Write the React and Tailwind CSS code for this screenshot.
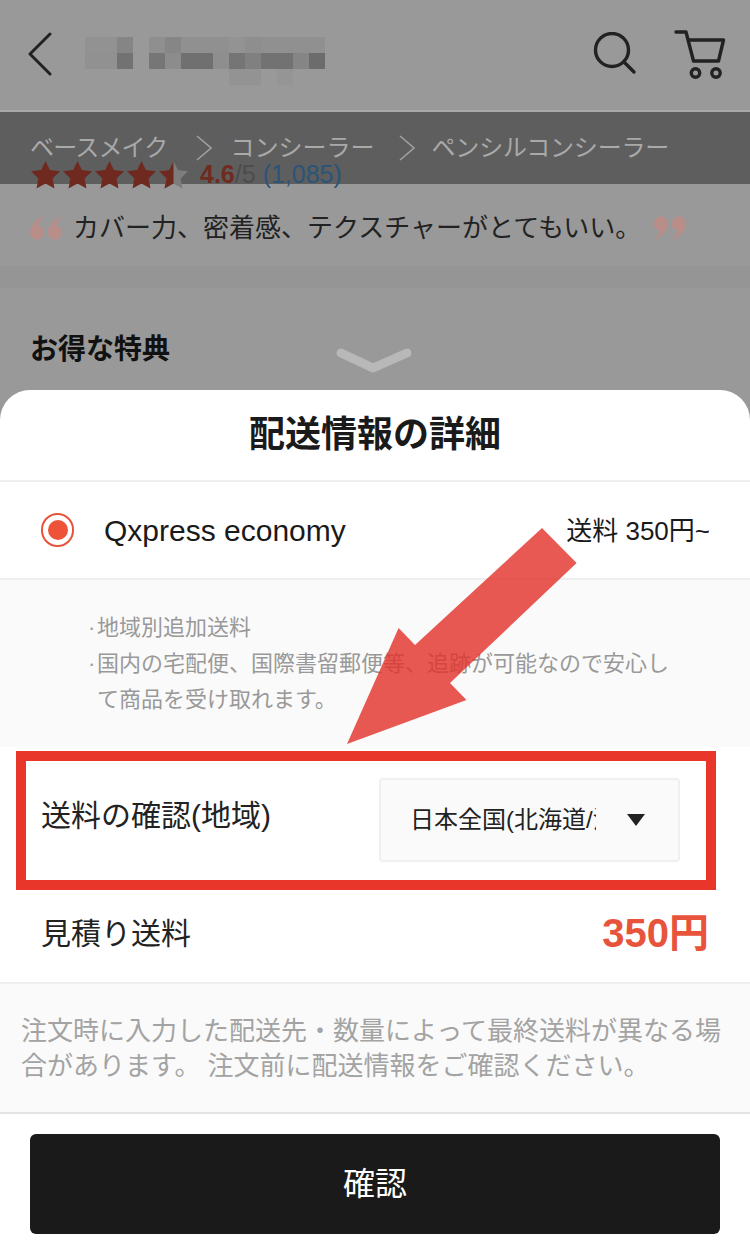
const MOSAIC = [
  [85, 37, 32, 16, "#929292"],
  [117, 37, 16, 16, "#858585"],
  [149, 37, 16, 16, "#8f8f8f"],
  [165, 37, 16, 16, "#868686"],
  [181, 37, 48, 16, "#909090"],
  [229, 37, 16, 16, "#939393"],
  [245, 37, 16, 16, "#8e8e8e"],
  [261, 37, 64, 16, "#909090"],
  [85, 53, 32, 16, "#919191"],
  [117, 53, 16, 16, "#727272"],
  [149, 53, 16, 16, "#767676"],
  [165, 53, 16, 16, "#8c8c8c"],
  [181, 53, 32, 16, "#707070"],
  [213, 53, 16, 16, "#8e8e8e"],
  [229, 53, 16, 16, "#757575"],
  [245, 53, 16, 16, "#808080"],
  [261, 53, 32, 16, "#727272"],
  [293, 53, 16, 16, "#858585"],
  [309, 53, 16, 16, "#6c6c6c"],
  [229, 69, 32, 16, "#939393"],
  [277, 69, 16, 16, "#959595"],
];

function Star({ half }) {
  const points = "14.5,0 18.9,9 29,10.3 21.6,17.4 23.5,27.5 14.5,22.6 5.500,27.5 7.400,17.4 0,10.3 10.100,9";
  return (
    <svg width="29" height="28" viewBox="0 0 29 28" className="shrink-0">
      <polygon points={points} fill={half ? "#7d7d7d" : "#6f2a20"} />
      {half && <polygon points="14.5,0 10.100,9 0,10.3 7.400,17.4 5.500,27.5 14.5,22.6" fill="#6f2a20" />}
    </svg>
  );
}

function Crumb({ children, className = "" }) {
  return <span className={`text-[24px] text-[#a9a9a9] whitespace-nowrap ${className}`}>{children}</span>;
}

function CrumbArrow({ className = "" }) {
  return (
    <svg width="16" height="26" viewBox="0 0 16 26" fill="none" stroke="#a0a0a0" strokeWidth="1.6" className={`shrink-0 ${className}`}>
      <path d="M1 1 L15 13 L1 25" />
    </svg>
  );
}

function QuoteMark({ close, className = "" }) {
  return (
    <svg width="33" height="24" viewBox="0 0 33 24" fill="#b98e88" className={`shrink-0 ${close ? "rotate-180" : ""} ${className}`}>
      <path d="M14 0 C6 3 1 9 0 16 C0 20 3 23.500 7 23.500 C11 23.500 14 20 14 16 C14 12 11 10 8 10 C9 6 11 3 14 0Z" />
      <path d="M32 0 C24 3 19 9 18 16 C18 20 21 23.500 25 23.500 C29 23.500 32 20 32 16 C32 12 29 10 26 10 C27 6 29 3 32 0Z" />
    </svg>
  );
}

export default function App() {
  return (
    <div className="relative w-[750px] h-[1254px] overflow-hidden bg-[#999999] font-['Liberation_Sans','Noto_Sans_CJK_JP',sans-serif]">
      {/* page behind the sheet */}
      <div className="h-[390px] overflow-hidden">
        <div className="flex items-center h-[112px] border-b-2 border-[#a9a9a9] pl-[27px]">
          <svg width="26" height="44" viewBox="0 0 26 44" fill="none" stroke="#222" strokeWidth="3" strokeLinecap="round" strokeLinejoin="round" className="mb-[2px]">
            <path d="M23 2 L3 22 L23 42" />
          </svg>
          {/* blurred shop name */}
          <svg width="240" height="48" viewBox="85 37 240 48" className="ml-[32px] mt-[12px]">
            {MOSAIC.map(([x, y, w, h, c]) => (
              <rect key={`${x}-${y}`} x={x} y={y} width={w} height={h} fill={c} />
            ))}
          </svg>
          <svg width="44" height="44" viewBox="0 0 44 44" fill="none" stroke="#222" strokeWidth="3.4" strokeLinecap="round" className="ml-auto mb-[2px]">
            <circle cx="19" cy="18" r="16.5" />
            <path d="M31 30 L41 40" />
          </svg>
          <svg width="52" height="52" viewBox="0 0 52 52" fill="none" stroke="#222" strokeWidth="3.4" strokeLinecap="round" strokeLinejoin="round" className="ml-[37px] mr-[24px]">
            <path d="M2 3 H12 L19.500 32 H44.500 L49.500 11 H15" />
            <circle cx="21.500" cy="44" r="4.200" />
            <circle cx="42" cy="44" r="4.200" />
          </svg>
        </div>
        <div className="flex items-center h-[72px] bg-[#5e5e5e] pl-[30px]">
          <Crumb className="tracking-[-0.8px]">ベースメイク</Crumb>
          <CrumbArrow className="ml-[28px] mr-[19px]" />
          <Crumb>コンシーラー</Crumb>
          <CrumbArrow className="ml-[24px] mr-[17px]" />
          <Crumb className="tracking-[-0.2px]">ペンシルコンシーラー</Crumb>
        </div>
        <div className="relative flex items-center h-[34px] mt-[-26px] pl-[31px]">
          <div className="flex gap-[3px] w-[169px]">
            <Star />
            <Star />
            <Star />
            <Star />
            <Star half />
          </div>
          <span className="text-[25px] font-bold text-[#702a20]">4.6</span>
          <span className="text-[25px] text-[#4c4c4c]">/5</span>
          <span className="text-[25px] text-[#2a5478] ml-[7px]">(1,085)</span>
        </div>
        <div className="flex items-center h-[60px] mt-[6px] pl-[30px]">
          <QuoteMark />
          <span className="ml-[10px] text-[26px] text-[#222] whitespace-nowrap">カバー力、密着感、テクスチャーがとてもいい。</span>
          <QuoteMark close className="ml-[12px]" />
        </div>
        <div className="h-[22px] mt-[8px] bg-[#959595]" />
        <h2 className="mt-[42px] pl-[30px] text-[28px] leading-[40px] font-bold text-[#111]">お得な特典</h2>
      </div>

      {/* bottom sheet */}
      <div className="bg-white rounded-t-[30px] h-[864px] flex flex-col">
        <div className="flex items-center justify-center h-[92px] shrink-0 border-b-2 border-[#eeeeee]">
          <h1 className="text-[36px] font-bold text-[#1a1a1a]">配送情報の詳細</h1>
        </div>
        <div className="flex items-center justify-between h-[98px] shrink-0 border-b-2 border-[#eeeeee] pl-[41px] pr-[40px]">
          <div className="flex items-center">
            <span className="flex items-center justify-center w-[33px] h-[34px] rounded-full border-2 border-[#e8533c]">
              <span className="w-[20px] h-[20px] rounded-full bg-[#ee5238]" />
            </span>
            <span className="ml-[30px] text-[30px] text-[#1a1a1a]">Qxpress economy</span>
          </div>
          <span className="pt-[3px] text-[26px] text-[#1a1a1a]">送料 350円~</span>
        </div>
        <div className="h-[167px] shrink-0 bg-[#fafafa] pl-[88px] pt-[30px] text-[22px] leading-[36px] text-[#999999]">
          <div className="flex">
            <span className="w-[9px]">·</span>
            <span>地域別追加送料</span>
          </div>
          <div className="flex">
            <span className="w-[9px]">·</span>
            <span className="w-[580px]">国内の宅配便、国際書留郵便等、追跡が可能なので安心して商品を受け取れます。</span>
          </div>
        </div>
        {/* highlighted region select */}
        <div className="flex items-center justify-between h-[139px] w-[700px] ml-[16px] mt-[4px] shrink-0 border-[10px] border-[#e8362a] pl-[15px] pr-[26px]">
          <span className="text-[30px] text-[#222] mb-[10px]">送料の確認(地域)</span>
          <div className="flex items-center w-[301px] h-[84px] rounded-[4px] border-2 border-[#f0f0f0] bg-[#fafafa] pl-[29px] mb-[2px]">
            <span className="w-[186px] overflow-hidden whitespace-nowrap text-[24px] text-[#222]">日本全国(北海道/沖縄)</span>
            <svg width="18" height="12" viewBox="0 0 18 12" className="ml-[31px]">
              <polygon points="0,0 18,0 9,12" fill="#222" />
            </svg>
          </div>
        </div>
        <div className="flex items-center justify-between h-[94px] shrink-0 border-b-2 border-[#eeeeee] pl-[41px] pr-[41px] pb-[6px]">
          <span className="text-[30px] text-[#222]">見積り送料</span>
          <span className="text-[40px] font-bold text-[#e8533c]">350円</span>
        </div>
        <div className="h-[130px] shrink-0 bg-[#fafafa] border-b-2 border-[#e4e4e4] pl-[21px] pt-[30px]">
          <p className="w-[709px] text-[26px] leading-[35px] text-[#a3a3a3]">
            注文時に入力した配送先・数量によって最終送料が異なる場合があります。 注文前に配送情報をご確認ください。
          </p>
        </div>
        <div className="px-[30px] pt-[20px]">
          <button className="w-full h-[100px] rounded-[6px] bg-[#1a1a1a] text-[32px] text-white">確認</button>
        </div>
      </div>

      {/* sheet handle */}
      <svg width="84" height="32" viewBox="0 0 84 32" fill="none" className="absolute left-[332px] top-[344px]">
        <path d="M9 9 L41 24 L75 9" stroke="#b8b8b8" strokeWidth="9" strokeLinecap="round" strokeLinejoin="round" />
      </svg>

      {/* annotation arrow */}
      <svg width="240" height="224" viewBox="345 525 240 224" className="absolute left-[345px] top-[525px]">
        <polygon points="347,744 466.500,700 450,683 576.600,563 542,528 415,645 398.600,628" fill="#e43028" fillOpacity="0.8" />
      </svg>
    </div>
  );
}
